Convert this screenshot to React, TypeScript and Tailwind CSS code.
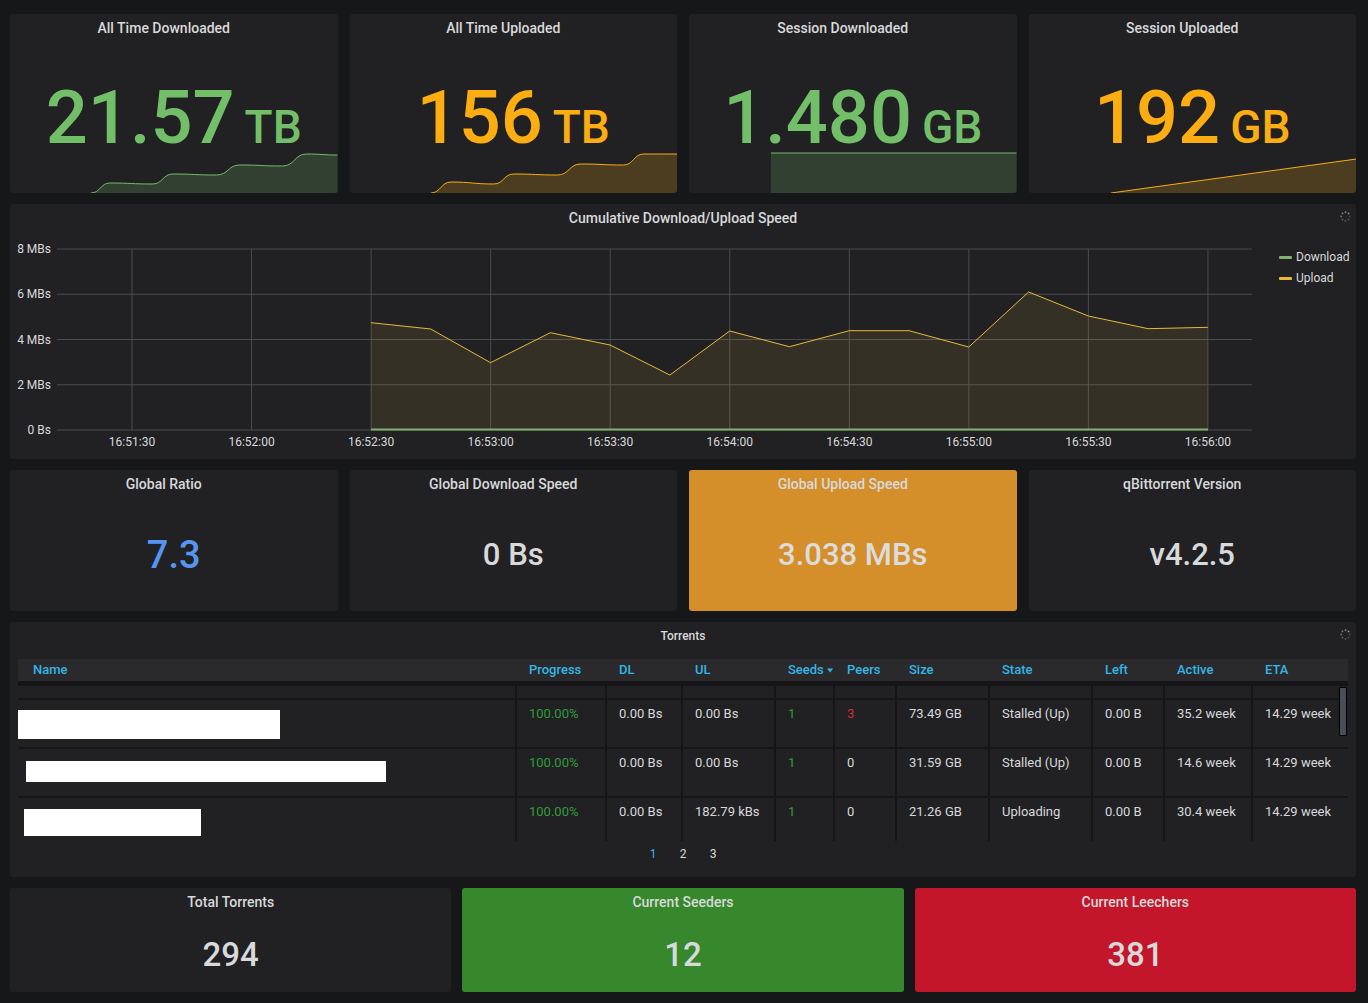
import React from "react";

type Pt = [number, number];

function smoothPath(pts: Pt[]) {
  let d = `M${pts[0][0]},${pts[0][1]}`;
  for (let i = 1; i < pts.length; i++) {
    const [x0, y0] = pts[i - 1];
    const [x1, y1] = pts[i];
    const mx = (x0 + x1) / 2;
    d += ` C${mx},${y0} ${mx},${y1} ${x1},${y1}`;
  }
  return d;
}

function Spark({ pts, stroke, fill, smooth = true }: { pts: Pt[]; stroke: string; fill: string; smooth?: boolean }) {
  const line = smooth ? smoothPath(pts) : "M" + pts.map((p) => p.join(",")).join(" L");
  const last = pts[pts.length - 1];
  const area = `${line} L${last[0]},50 L${pts[0][0]},50 Z`;
  return (
    <svg className="pointer-events-none absolute bottom-0 left-0 h-[50px] w-full" viewBox="0 0 328 50" preserveAspectRatio="none">
      <path d={area} fill={fill} />
      <path d={line} fill="none" stroke={stroke} strokeWidth="1" />
    </svg>
  );
}

function Spinner({ className }: { className: string }) {
  const dots = Array.from({ length: 8 }, (_, i) => {
    const a = (i / 8) * Math.PI * 2;
    return <circle key={i} cx={5.5 + 4.3 * Math.cos(a)} cy={5.5 + 4.3 * Math.sin(a)} r="0.9" fill="#9a9a9a" opacity={0.35 + (i / 8) * 0.65} />;
  });
  return (
    <svg className={className} width="11" height="11" viewBox="0 0 11 11">
      {dots}
    </svg>
  );
}

const GREEN = "#73bf69";
const ORANGE = "#fbad12";

const topStats = [
  {
    title: "All Time Downloaded",
    value: "21.57",
    unit: "TB",
    color: "text-[#73bf69]",
    spark: <Spark stroke={GREEN} fill="rgba(115,191,105,0.2)" pts={[[81, 50], [100, 40], [143, 41], [163, 31], [207, 32], [230, 22], [273, 23], [297, 11], [328, 12]]} />,
  },
  {
    title: "All Time Uploaded",
    value: "156",
    unit: "TB",
    color: "text-[#fbad12]",
    spark: <Spark stroke={ORANGE} fill="rgba(251,173,18,0.2)" pts={[[81, 50], [101, 39], [144, 41], [164, 31], [208, 32], [231, 21], [274, 22], [294, 11], [328, 11]]} />,
  },
  {
    title: "Session Downloaded",
    value: "1.480",
    unit: "GB",
    color: "text-[#73bf69]",
    spark: <Spark smooth={false} stroke={GREEN} fill="rgba(115,191,105,0.2)" pts={[[82, 10], [328, 10]]} />,
  },
  {
    title: "Session Uploaded",
    value: "192",
    unit: "GB",
    color: "text-[#fbad12]",
    spark: <Spark smooth={false} stroke={ORANGE} fill="rgba(251,173,18,0.2)" pts={[[82, 50], [328, 16]]} />,
  },
];

const yTicks = ["8 MBs", "6 MBs", "4 MBs", "2 MBs", "0 Bs"];
const xTicks = ["16:51:30", "16:52:00", "16:52:30", "16:53:00", "16:53:30", "16:54:00", "16:54:30", "16:55:00", "16:55:30", "16:56:00"];
const upload = [90.7, 97, 130.7, 100.7, 113, 143, 99, 114.7, 98.7, 98.7, 115, 60, 84, 96.7, 95.3];

function SpeedChart() {
  const pts = upload.map((y, i) => [361 + i * 59.78, y] as Pt);
  const line = "M" + pts.map((p) => `${p[0]},${p[1]}`).join(" L");
  const area = `${line} L${pts[pts.length - 1][0]},198 L361,198 Z`;
  return (
    <svg width="1255" height="227" viewBox="0 0 1255 227" className="shrink-0">
      {yTicks.map((t, i) => {
        const y = 17 + i * 45.25;
        return (
          <g key={t}>
            <line x1="47" x2="1242" y1={y} y2={y} stroke="#4c4c50" strokeWidth="1" />
            <text x="41" y={y + 4} textAnchor="end" fontSize="12" fill="#d8d9da" fontFamily="Roboto, sans-serif">
              {t}
            </text>
          </g>
        );
      })}
      {xTicks.map((t, i) => {
        const x = 122 + i * 119.55;
        return (
          <g key={t}>
            <line x1={x} x2={x} y1="17" y2="198" stroke="#4c4c50" strokeWidth="1" />
            <text x={x} y="214" textAnchor="middle" fontSize="12" fill="#d8d9da" fontFamily="Roboto, sans-serif">
              {t}
            </text>
          </g>
        );
      })}
      <path d={area} fill="rgba(234,184,57,0.1)" />
      <path d={line} fill="none" stroke="#eab839" strokeWidth="1" />
      <line x1="361" x2="1198" y1="197.5" y2="197.5" stroke="#7eb26d" strokeWidth="2" />
    </svg>
  );
}

const cols = "grid grid-cols-[497px_90px_76px_93px_59px_62px_93px_103px_72px_88px_88px]";
const headers = ["Progress", "DL", "UL", "Seeds", "Peers", "Size", "State", "Left", "Active", "ETA"];

const rows = [
  { box: "ml-0 mt-[10px] h-[29px] w-[262px]", cells: ["100.00%", "0.00 Bs", "0.00 Bs", "1", "3", "73.49 GB", "Stalled (Up)", "0.00 B", "35.2 week", "14.29 week"] },
  { box: "ml-[8px] mt-[12px] h-[21px] w-[360px]", cells: ["100.00%", "0.00 Bs", "0.00 Bs", "1", "0", "31.59 GB", "Stalled (Up)", "0.00 B", "14.6 week", "14.29 week"] },
  { box: "ml-[6px] mt-[11px] h-[27px] w-[177px]", cells: ["100.00%", "0.00 Bs", "182.79 kBs", "1", "0", "21.26 GB", "Uploading", "0.00 B", "30.4 week", "14.29 week"] },
];

function cellColor(col: number, v: string) {
  if (col === 0 || col === 3) return "text-[#2f9e3a]";
  if (col === 4 && v === "3") return "text-[#d4283a]";
  return "text-[#d8d9da]";
}

function TorrentsTable() {
  return (
    <div className="relative flex h-[255px] shrink-0 flex-col rounded-[3px] bg-[#212124]">
      <div className="h-[28px] text-center text-[12px] font-medium leading-[28px] text-[#d8d9da]">Torrents</div>
      <Spinner className="absolute right-[5px] top-[7px]" />
      <div className="mx-[8px] mt-[9px]">
        <div className={`${cols} h-[22px] bg-[#2a2a2d] text-[13px] font-medium leading-[22px] text-[#33b5e5]`}>
          <div className="pl-[15px]">Name</div>
          {headers.map((h) => (
            <div key={h} className="flex items-center gap-[3px] pl-[14px]">
              {h}
              {h === "Seeds" && (
                <svg width="8" height="5" viewBox="0 0 8 5">
                  <path d="M0 0 L8 0 L4 5 Z" fill="#33b5e5" />
                </svg>
              )}
            </div>
          ))}
        </div>
        <div className="relative h-[160px] overflow-hidden border-t-[5px] border-[#151517]">
          <div className={`${cols} h-[12px]`}>
            <div />
            {headers.map((h) => (
              <div key={h} className="border-l-2 border-[#151517]" />
            ))}
          </div>
          {rows.map((r, ri) => (
            <div key={ri} className={`${cols} h-[49px] border-t-2 border-[#151517] text-[13px] leading-[16px]`}>
              <div>
                <div className={`bg-white ${r.box}`} />
              </div>
              {r.cells.map((c, ci) => (
                <div key={ci} className={`whitespace-nowrap border-l-2 border-[#151517] pl-[12px] pt-[6px] ${cellColor(ci, c)}`}>
                  {c}
                </div>
              ))}
            </div>
          ))}
          <div className="absolute right-[1px] top-[1px] h-[49px] w-[8px] rounded-[1px] border border-black bg-[#4b4d56]" />
        </div>
        <div className="mt-[5px] flex justify-center text-[12px] leading-[16px]">
          <span className="w-[30px] text-center text-[#33b5e5]">1</span>
          <span className="w-[30px] text-center text-[#d8d9da]">2</span>
          <span className="w-[30px] text-center text-[#d8d9da]">3</span>
        </div>
      </div>
    </div>
  );
}

const midStats = [
  { title: "Global Ratio", value: "7.3", cls: "bg-[#212124] text-[#5794f2] text-[38px]" },
  { title: "Global Download Speed", value: "0 Bs", cls: "bg-[#212124] text-[#d8d9da] text-[31px]" },
  { title: "Global Upload Speed", value: "3.038 MBs", cls: "bg-[#d48e2a] text-[#dcdcdc] text-[31px]" },
  { title: "qBittorrent Version", value: "v4.2.5", cls: "bg-[#212124] text-[#d8d9da] text-[31px]" },
];

const bottomStats = [
  { title: "Total Torrents", value: "294", bg: "bg-[#212124]" },
  { title: "Current Seeders", value: "12", bg: "bg-[#37872d]" },
  { title: "Current Leechers", value: "381", bg: "bg-[#c4162a]" },
];

export default function App() {
  return (
    <div className="flex h-screen flex-col gap-[11px] overflow-hidden bg-[#161719] pb-[11px] pl-[10px] pr-[12px] pt-[14px] font-['Roboto','Liberation_Sans',sans-serif]">
      <div className="grid h-[179px] shrink-0 grid-cols-4 gap-x-[12px]">
        {topStats.map((s) => (
          <div key={s.title} className="relative overflow-hidden rounded-[3px] bg-[#212124]">
            {s.spark}
            <div className="relative h-[28px] pr-[20px] text-center text-[14px] font-medium leading-[28px] text-[#d8d9da]">{s.title}</div>
            <div className={`relative mt-[39px] flex items-baseline justify-center font-medium leading-none ${s.color}`}>
              <span className="text-[74px]">{s.value}</span>
              <span className="ml-[10px] text-[46px]">{s.unit}</span>
            </div>
          </div>
        ))}
      </div>

      <div className="relative flex h-[255px] shrink-0 flex-col rounded-[3px] bg-[#212124]">
        <div className="h-[28px] text-center text-[14px] font-medium leading-[28px] text-[#d8d9da]">Cumulative Download/Upload Speed</div>
        <Spinner className="absolute right-[5px] top-[7px]" />
        <div className="flex flex-1">
          <SpeedChart />
          <div className="ml-[14px] flex flex-col gap-[5px] pt-[17px] text-[12px] leading-[16px] text-[#d8d9da]">
            <div className="flex items-center gap-[4px]">
              <span className="h-[3px] w-[13px] rounded-[1px] bg-[#7eb26d]" />
              Download
            </div>
            <div className="flex items-center gap-[4px]">
              <span className="h-[3px] w-[13px] rounded-[1px] bg-[#eab839]" />
              Upload
            </div>
          </div>
        </div>
      </div>

      <div className="grid h-[141px] shrink-0 grid-cols-4 gap-x-[12px]">
        {midStats.map((s) => (
          <div key={s.title} className={`flex flex-col rounded-[3px] ${s.cls}`}>
            <div className="h-[28px] pr-[20px] text-center text-[14px] font-medium leading-[28px] text-[#d8d9da]">{s.title}</div>
            <div className="flex flex-1 items-center justify-center font-medium leading-none">{s.value}</div>
          </div>
        ))}
      </div>

      <TorrentsTable />

      <div className="grid h-[104px] shrink-0 grid-cols-3 gap-x-[11px]">
        {bottomStats.map((s) => (
          <div key={s.title} className={`flex flex-col rounded-[3px] ${s.bg}`}>
            <div className="h-[28px] text-center text-[14px] font-medium leading-[28px] text-[#d8d9da]">{s.title}</div>
            <div className="flex flex-1 items-center justify-center text-[33px] font-medium leading-none text-[#d8d9da]">{s.value}</div>
          </div>
        ))}
      </div>
    </div>
  );
}
